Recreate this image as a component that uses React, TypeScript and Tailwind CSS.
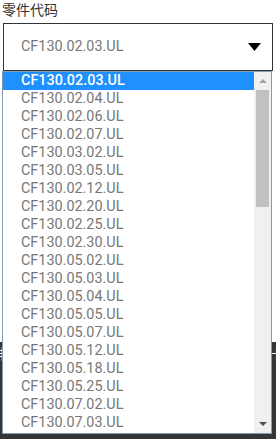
import React from "react";

const codes = [
  "CF130.02.03.UL",
  "CF130.02.04.UL",
  "CF130.02.06.UL",
  "CF130.02.07.UL",
  "CF130.03.02.UL",
  "CF130.03.05.UL",
  "CF130.02.12.UL",
  "CF130.02.20.UL",
  "CF130.02.25.UL",
  "CF130.02.30.UL",
  "CF130.05.02.UL",
  "CF130.05.03.UL",
  "CF130.05.04.UL",
  "CF130.05.05.UL",
  "CF130.05.07.UL",
  "CF130.05.12.UL",
  "CF130.05.18.UL",
  "CF130.05.25.UL",
  "CF130.07.02.UL",
  "CF130.07.03.UL",
];

const Scrollbar = () => (
  <div className="flex w-[17px] shrink-0 flex-col bg-[#f0f0f0]">
    <div className="flex h-[18px] items-center justify-center">
      <svg width="8" height="4" viewBox="0 0 8 4">
        <polygon points="0,4 8,4 4,0" fill="#a3a3a3" />
      </svg>
    </div>
    <div className="mx-[2px] h-[117px] bg-[#c1c1c1]" />
    <div className="flex-1" />
    <div className="flex h-[18px] items-center justify-center">
      <svg width="8" height="4" viewBox="0 0 8 4">
        <polygon points="0,0 8,0 4,4" fill="#505050" />
      </svg>
    </div>
  </div>
);

const App = () => {
  return (
    <div className="relative h-[439px] w-[276px] overflow-hidden bg-white font-['Roboto','Noto_Sans_CJK_SC',sans-serif]">
      <div className="flex flex-col">
        <div className="h-[21px] pl-[2px] pt-[1px] text-[14px] leading-[18px] text-[#333]">
          零件代码
        </div>
        <div className="mx-[3px] mt-[2px] flex h-[48px] items-center justify-between border border-[#333] pl-[17px] pr-[11px]">
          <span className="text-[14.4px] text-[#777]">CF130.02.03.UL</span>
          <svg width="13" height="8" viewBox="0 0 13 8">
            <polygon points="0,0 13,0 6.5,8" fill="#000" />
          </svg>
        </div>
        <div className="mt-[271px] flex h-[97px] justify-between bg-[#353535] text-[14px] text-white">
          <span className="-ml-[6px] mt-[2px]">排</span>
          <span className="-mr-[8px] mt-[2px]">卡</span>
        </div>
      </div>

      <div className="absolute left-[2px] top-[71px] flex h-[363px] w-[270px] border border-[#7f9db9] bg-white">
        <ul className="flex-1">
          {codes.map((c, i) => (
            <li
              key={c}
              className={
                i === 0
                  ? "h-[18px] bg-[#1e90ff] pl-[18px] text-[14.4px] leading-[18px] font-medium text-white"
                  : "h-[18px] pl-[18px] text-[14.4px] leading-[18px] text-[#777]"
              }
            >
              {c}
            </li>
          ))}
        </ul>
        <Scrollbar />
      </div>
    </div>
  );
};

export default App;
